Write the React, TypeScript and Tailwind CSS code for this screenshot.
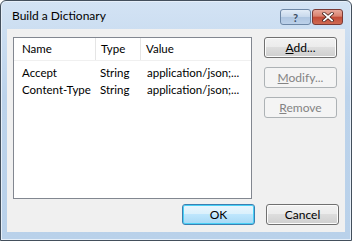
import React from "react";

const font = { fontFamily: 'Lato, "Noto Sans", sans-serif' };

function Btn({
  children,
  disabled,
  primary,
}: {
  children: React.ReactNode;
  disabled?: boolean;
  primary?: boolean;
}) {
  if (disabled)
    return (
      <div className="h-[21px] w-[73px] rounded-[3px] border border-[#adb2b5] bg-[#f4f4f4] flex items-center justify-center text-[12px] text-[#838383]">
        {children}
      </div>
    );
  return (
    <div
      className={
        "h-[21px] w-[73px] rounded-[3px] border flex items-center justify-center text-[12px] text-black " +
        (primary
          ? "border-[#3c7fb1] bg-[linear-gradient(#eaf6fd_0%,#d9f0fc_50%,#bee6fd_50%,#a7d9f5_100%)] shadow-[inset_0_0_0_1px_#48d0f6]"
          : "border-[#707070] bg-[linear-gradient(#f2f2f2_0%,#ebebeb_50%,#dddddd_50%,#cfcfcf_100%)] shadow-[inset_0_0_0_1px_#fcfcfc]")
      }
    >
      {children}
    </div>
  );
}

export default function App() {
  const rows = [
    { name: "Accept", type: "String", value: "application/json;..." },
    { name: "Content-Type", type: "String", value: "application/json;..." },
  ];

  return (
    <div
      className="w-[352px] h-[241px] bg-white text-black text-[11.5px] leading-none whitespace-nowrap"
      style={font}
    >
      <div className="w-full h-full flex flex-col border border-[#434f5c] rounded-t-[6px] bg-[linear-gradient(180deg,#d3e3f4_0%,#bcd3eb_40%,#b9d1ea_100%)] shadow-[inset_0_0_0_1px_#e6eff9]">
        {/* title bar */}
        <div className="h-[29px] flex items-start pl-[11px] pr-[8px]">
          <span className="mt-[9px] text-[12px] text-black">Build a Dictionary</span>
          <div className="ml-auto mt-[8px] flex gap-[1px]">
            <div className="w-[31px] h-[16px] rounded-[3px] border border-[#6d87a6] bg-[linear-gradient(#e2ecf7_0%,#c7d8ec_50%,#aec5e0_50%,#bcd1ea_100%)] flex items-center justify-center">
              <span className="text-[11px] font-bold text-[#3a4c63] leading-none">?</span>
            </div>
            <div className="w-[31px] h-[16px] rounded-[3px] border border-[#7a3a35] bg-[linear-gradient(#e9a99c_0%,#d9826f_45%,#c24a36_50%,#cf6a52_100%)] flex items-center justify-center">
              <svg width="12" height="10" viewBox="0 0 12 10">
                <path
                  d="M2 1.5 L10 8.5 M10 1.5 L2 8.5"
                  stroke="#3e1c17"
                  strokeWidth="3.2"
                  strokeLinecap="square"
                />
                <path
                  d="M2 1.5 L10 8.5 M10 1.5 L2 8.5"
                  stroke="#ffffff"
                  strokeWidth="1.8"
                  strokeLinecap="square"
                />
              </svg>
            </div>
          </div>
        </div>

        {/* client area */}
        <div className="mx-[6px] flex-1 bg-[#f0f0f0] flex flex-col pt-[8px] px-[6px] pb-[7px]">
          <div className="flex gap-[12px]">
            <div className="w-[239px] h-[162px] border border-[#828790] bg-white">
              <div className="h-[23px] flex items-center border-b border-[#f0f0f0]">
                <div className="w-[82px] h-full flex items-center pl-[8px] border-r border-[#e5e5e5]">
                  Name
                </div>
                <div className="w-[45px] h-full flex items-center pl-[5px] border-r border-[#e5e5e5]">
                  Type
                </div>
                <div className="flex-1 h-full flex items-center pl-[5px]">Value</div>
              </div>
              <div className="pt-[3px]">
                {rows.map((r) => (
                  <div key={r.name} className="h-[17px] flex items-center">
                    <div className="w-[82px] pl-[8px]">{r.name}</div>
                    <div className="w-[45px] pl-[4px]">{r.type}</div>
                    <div className="flex-1 pl-[6px]">{r.value}</div>
                  </div>
                ))}
              </div>
            </div>
            <div className="flex flex-col gap-[9px]">
              <Btn>
                <span>
                  <u>A</u>dd...
                </span>
              </Btn>
              <Btn disabled>
                <span>
                  <u>M</u>odify...
                </span>
              </Btn>
              <Btn disabled>
                <span>
                  <u>R</u>emove
                </span>
              </Btn>
            </div>
          </div>
          <div className="mt-[5px] flex justify-end gap-[11px]">
            <Btn primary>OK</Btn>
            <Btn>Cancel</Btn>
          </div>
        </div>
        <div className="h-[8px]" />
      </div>
    </div>
  );
}
